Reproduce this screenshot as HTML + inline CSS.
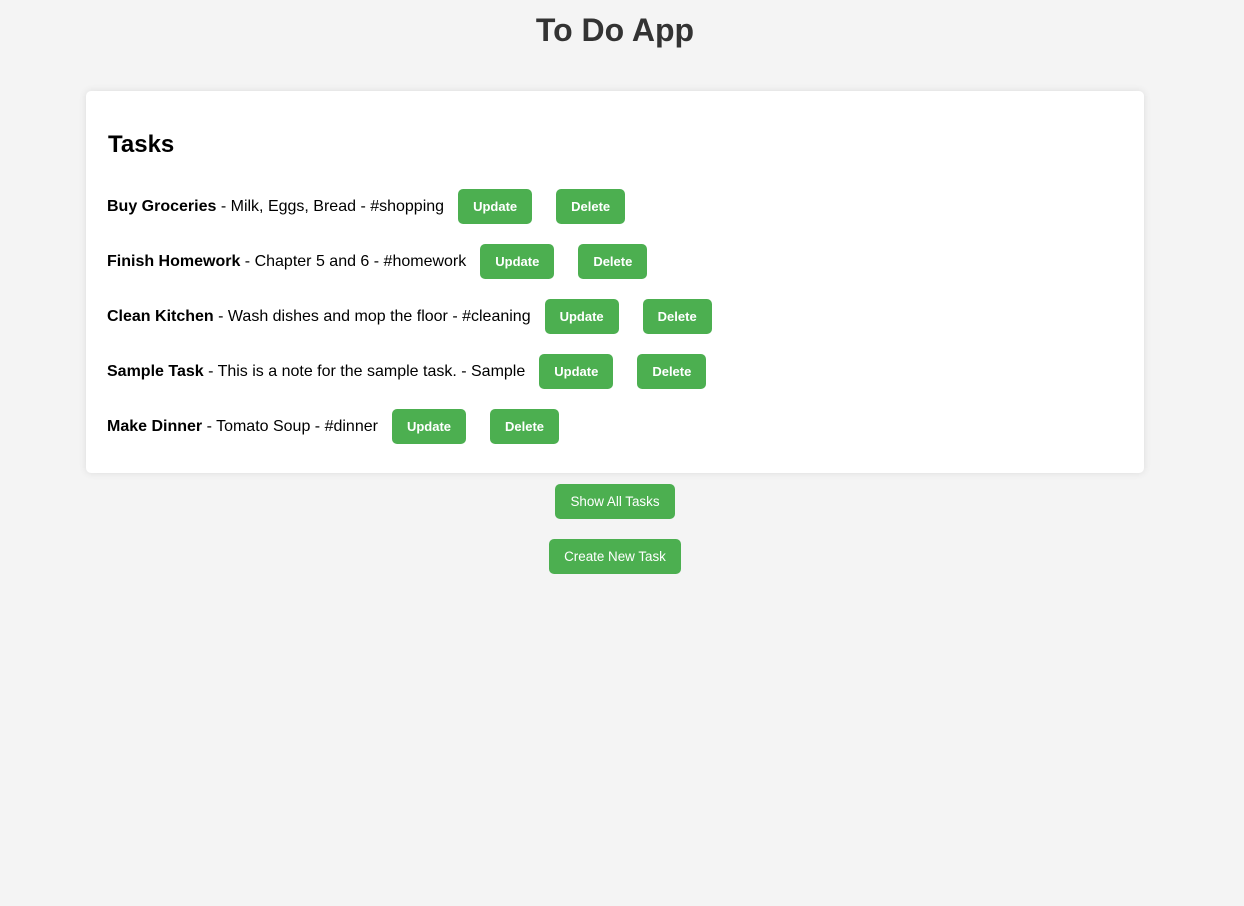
<!DOCTYPE html>
<html><head><style>
body{margin:0;background:#f4f4f4;font-family:"Liberation Sans",Arial,sans-serif;width:1244px;height:906px;overflow:hidden}
h1{margin:0;position:absolute;top:12px;left:0;width:1230px;text-align:center;font-size:32px;color:#333;line-height:37px}
.card{position:absolute;left:86px;top:91px;width:1058px;height:382px;background:#fff;border-radius:5px;box-shadow:0 0 8px rgba(0,0,0,0.1)}
h2{position:absolute;left:22px;top:40px;margin:0;font-size:24px;line-height:28px;color:#000}
.row{position:absolute;left:21px;height:35px;display:flex;align-items:center;font-size:16px;color:#000;white-space:nowrap}
.btn{display:inline-block;background:#4caf50;color:#fff;font-weight:bold;font-size:13px;height:35px;line-height:35px;padding:0 15px;border-radius:5px;box-sizing:border-box}
.row .u{margin-left:14px}.row .d{margin-left:24px}
.c{position:absolute;left:0;width:1230px;text-align:center}
.n{font-weight:normal;font-size:13.4px;padding:0 15px}
</style></head><body>
<h1>To Do App</h1>
<div class="card">
<h2>Tasks</h2>
<div class="row" style="top:98px"><span><b>Buy Groceries</b> - Milk, Eggs, Bread - #shopping</span><span class="btn u">Update</span><span class="btn d">Delete</span></div>
<div class="row" style="top:153px"><span><b>Finish Homework</b> - Chapter 5 and 6 - #homework</span><span class="btn u">Update</span><span class="btn d">Delete</span></div>
<div class="row" style="top:208px"><span><b>Clean Kitchen</b> - Wash dishes and mop the floor - #cleaning</span><span class="btn u">Update</span><span class="btn d">Delete</span></div>
<div class="row" style="top:263px"><span><b>Sample Task</b> - This is a note for the sample task. - Sample</span><span class="btn u">Update</span><span class="btn d">Delete</span></div>
<div class="row" style="top:318px"><span><b>Make Dinner</b> - Tomato Soup - #dinner</span><span class="btn u">Update</span><span class="btn d">Delete</span></div>
</div>
<div class="c" style="top:484px"><span class="btn n">Show All Tasks</span></div>
<div class="c" style="top:539px"><span class="btn n">Create New Task</span></div>
</body></html>
